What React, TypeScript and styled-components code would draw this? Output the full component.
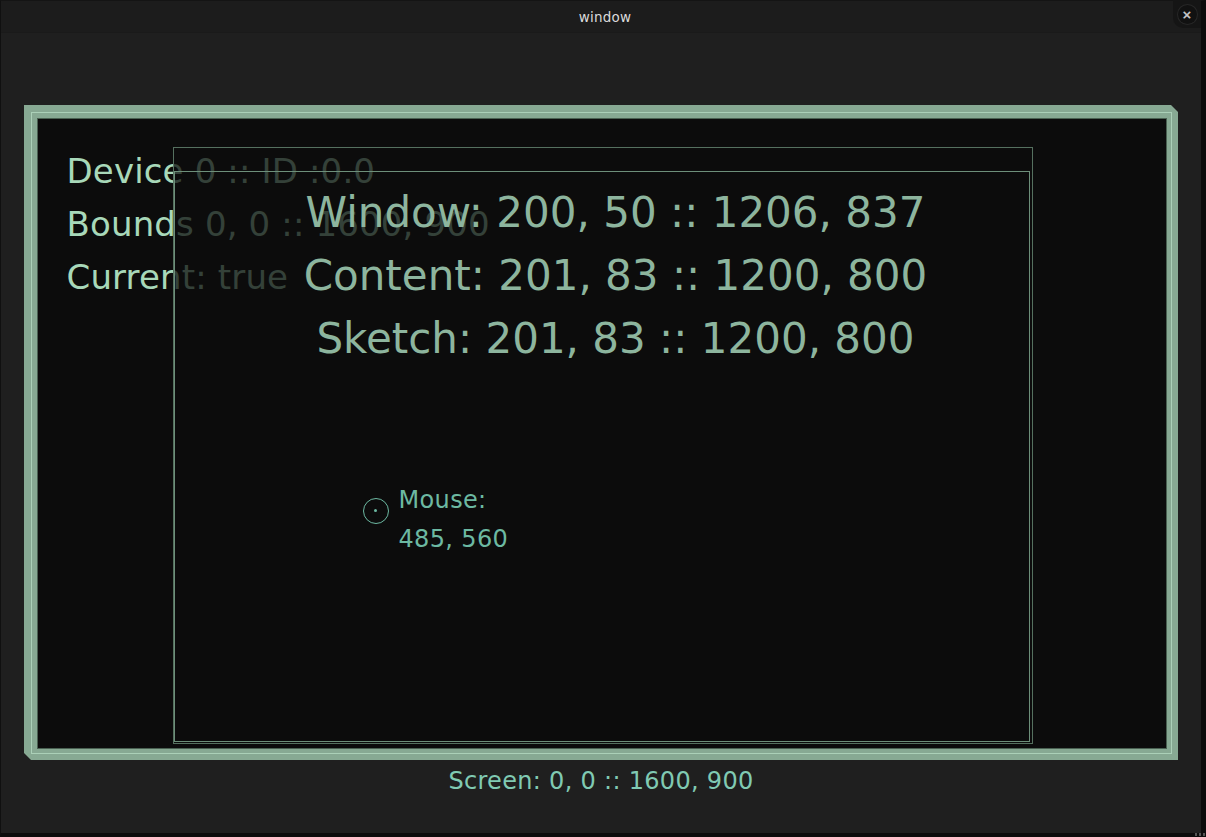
import styled, { createGlobalStyle } from 'styled-components'

const GlobalStyle = createGlobalStyle`
  html, body {
    margin: 0;
    padding: 0;
    background: #0e0e0e;
    overflow: hidden;
  }
  * {
    box-sizing: border-box;
  }
`

const sketchFont = `"DejaVu Sans", "Liberation Sans", sans-serif`

const info = ['Device 0 :: ID :0.0', 'Bounds 0, 0 :: 1600, 900', 'Current: true']

const bounds = [
  'Window: 200, 50 :: 1206, 837',
  'Content: 201, 83 :: 1200, 800',
  'Sketch: 201, 83 :: 1200, 800',
]

const App = () => {
  return (
    <>
      <GlobalStyle />
      <Window>
        <TitleBar>
          window
          <CloseTab>
            <CloseButton>×</CloseButton>
          </CloseTab>
        </TitleBar>
        <Body>
          <ScreenFrame>
            <ScreenEdge>
              <Screen>
                <InfoList>
                  {info.map((line) => (
                    <div key={line}>{line}</div>
                  ))}
                </InfoList>

                <WindowRect>
                  <ContentRect>
                    <BoundsList>
                      {bounds.map((line) => (
                        <div key={line}>{line}</div>
                      ))}
                    </BoundsList>
                    <MouseMarker>
                      <Crosshair>
                        <span />
                      </Crosshair>
                      <MouseText>
                        <div>Mouse:</div>
                        <div>485, 560</div>
                      </MouseText>
                    </MouseMarker>
                  </ContentRect>
                </WindowRect>
              </Screen>
            </ScreenEdge>
          </ScreenFrame>
          <ScreenLabel>Screen: 0, 0 :: 1600, 900</ScreenLabel>
        </Body>
        <Grip />
      </Window>
    </>
  )
}

export default App

const Window = styled.div`
  position: relative;
  width: 1206px;
  height: 837px;
  display: flex;
  flex-direction: column;
  background: #1f1f1f;
  border-left: 1px solid #101010;
  border-top: 1px solid #141414;
  border-right: 5px solid #0c0c0c;
  border-bottom: 4px solid #0c0c0c;
`

const TitleBar = styled.div`
  position: relative;
  height: 32px;
  flex-shrink: 0;
  display: flex;
  align-items: center;
  justify-content: center;
  padding-left: 8px;
  background: #1c1c1c;
  border-bottom: 1px solid #1a1a1a;
  color: #dadada;
  font-family: ${sketchFont};
  font-size: 13.5px;
  letter-spacing: 0.2px;
`

const CloseTab = styled.div`
  position: absolute;
  top: -1px;
  right: 0;
  width: 28px;
  height: 28px;
  display: flex;
  align-items: center;
  justify-content: center;
  background: #151515;
  border-bottom-left-radius: 10px;
`

const CloseButton = styled.div`
  width: 19px;
  height: 19px;
  display: flex;
  align-items: center;
  justify-content: center;
  border-radius: 50%;
  background: #111111;
  box-shadow: 0 0 0 1px #272727;
  color: #c4c4c4;
  font-family: "Liberation Sans", sans-serif;
  font-size: 15px;
  font-weight: 700;
  line-height: 1;
`

const Body = styled.div`
  flex: 1;
  display: flex;
  flex-direction: column;
  align-items: flex-start;
  padding: 72px 0 0 23px;
`

const ScreenFrame = styled.div`
  width: 1154px;
  height: 655px;
  padding: 7px;
  background: #87a993;
  clip-path: polygon(
    0 0,
    calc(100% - 7px) 0,
    100% 7px,
    100% 100%,
    7px 100%,
    0 calc(100% - 7px)
  );
`

const ScreenEdge = styled.div`
  width: 1141px;
  height: 642px;
  padding: 5.5px;
  border: 1.5px solid #abd0b8;
  background: #87a993;
`

const Screen = styled.div`
  position: relative;
  width: 100%;
  height: 100%;
  background: #0c0c0c;
  box-shadow: 0 0 0 1px #4a6152;
`

const InfoList = styled.div`
  padding: 26px 0 0 29px;
  color: #a8d8b9;
  font-family: ${sketchFont};
  font-size: 34px;
  line-height: 53px;
  letter-spacing: 0.15px;
  white-space: nowrap;
`

const WindowRect = styled.div`
  position: absolute;
  left: 135px;
  top: 28px;
  width: 860px;
  height: 597px;
  padding-top: 23px;
  border: 1px solid #55705f;
  background: rgba(12, 12, 12, 0.74);
`

const ContentRect = styled.div`
  position: relative;
  width: 856px;
  height: 571px;
  border: 1px solid #6d8f7a;
`

const BoundsList = styled.div`
  padding: 9px 0 0 28px;
  text-align: center;
  color: #8db59e;
  font-family: ${sketchFont};
  font-size: 42px;
  line-height: 63px;
  white-space: nowrap;
`

const MouseMarker = styled.div`
  position: absolute;
  left: 188px;
  top: 309px;
  display: flex;
  align-items: flex-start;
  gap: 10px;
`

const Crosshair = styled.div`
  width: 26px;
  height: 26px;
  margin-top: 17px;
  display: flex;
  align-items: center;
  justify-content: center;
  border: 1.5px solid #6cb9a2;
  border-radius: 50%;

  span {
    width: 3px;
    height: 3px;
    border-radius: 50%;
    background: #6cb9a2;
  }
`

const MouseText = styled.div`
  color: #6cb9a2;
  font-family: ${sketchFont};
  font-size: 24px;
  line-height: 39px;
  letter-spacing: 0.35px;
  white-space: nowrap;
`

const ScreenLabel = styled.div`
  width: 1154px;
  margin-top: 7px;
  text-align: center;
  color: #80cab3;
  font-family: ${sketchFont};
  font-size: 24px;
  line-height: 28px;
  letter-spacing: 0.3px;
`

const Grip = styled.div`
  position: absolute;
  right: -4px;
  bottom: -3px;
  width: 10px;
  height: 3px;
  background: repeating-linear-gradient(90deg, #555 0 2px, transparent 2px 4px);
`
